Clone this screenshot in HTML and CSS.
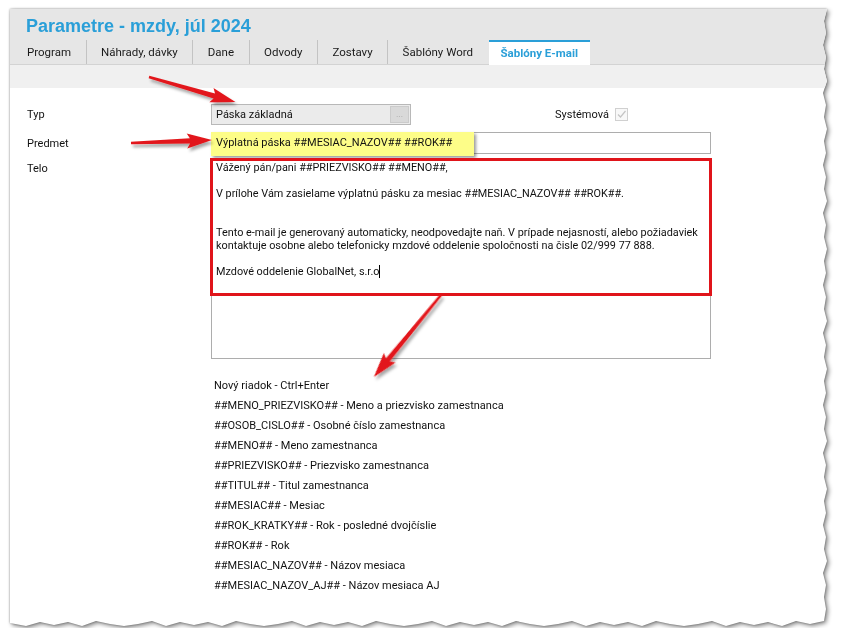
FILE: index.html
```html
<!DOCTYPE html>
<html lang="sk">
<head>
    <meta charset="UTF-8">
    <title>Parametre - mzdy</title>
    <link rel="stylesheet" href="styles.css">
</head>
<body>
    <div class="sheet">
        <div class="panel">
            <header class="top">
                <h1 class="title">Parametre - mzdy, júl 2024</h1>
                <nav class="tabs">
                    <span class="tab">Program</span>
                    <span class="tab">Náhrady, dávky</span>
                    <span class="tab">Dane</span>
                    <span class="tab">Odvody</span>
                    <span class="tab">Zostavy</span>
                    <span class="tab">Šablóny Word</span>
                    <span class="tab active">Šablóny E-mail</span>
                </nav>
            </header>
            <div class="toolbar"></div>
            <section class="form">
                <div class="row">
                    <span class="lbl">Typ</span>
                    <div class="select">
                        <span>Páska základná</span>
                        <span class="dots">...</span>
                    </div>
                    <span class="sys">Systémová</span>
                    <span class="check">
                        <svg width="11" height="11" viewBox="0 0 11 11"><path d="M2 5.5 L4.5 8 L9.5 2" fill="none" stroke="#c4c4c4" stroke-width="1.2"/></svg>
                    </span>
                </div>
                <div class="row row-predmet">
                    <span class="lbl">Predmet</span>
                    <div class="input">
                        <div class="highlight">Výplatná páska ##MESIAC_NAZOV## ##ROK##</div>
                    </div>
                </div>
                <div class="row row-telo">
                    <span class="lbl lbl-top">Telo</span>
                    <div class="textarea">
                        <p>Vážený pán/pani ##PRIEZVISKO## ##MENO##,</p>
                        <p class="gap1">V prílohe Vám zasielame výplatnú pásku za mesiac ##MESIAC_NAZOV## ##ROK##.</p>
                        <p class="gap2">Tento e-mail je generovaný automaticky, neodpovedajte naň. V prípade nejasností, alebo požiadaviek</p>
                        <p>kontaktuje osobne alebo telefonicky mzdové oddelenie spoločnosti na čisle 02/999 77 888.</p>
                        <p class="gap1">Mzdové oddelenie GlobalNet, s.r.o<span class="caret"></span></p>
                        <div class="mark"></div>
                    </div>
                </div>
                <ul class="hints">
                    <li>Nový riadok - Ctrl+Enter</li>
                    <li>##MENO_PRIEZVISKO## - Meno a priezvisko zamestnanca</li>
                    <li>##OSOB_CISLO## - Osobné číslo zamestnanca</li>
                    <li>##MENO## - Meno zamestnanca</li>
                    <li>##PRIEZVISKO## - Priezvisko zamestnanca</li>
                    <li>##TITUL## - Titul zamestnanca</li>
                    <li>##MESIAC## - Mesiac</li>
                    <li>##ROK_KRATKY## - Rok - posledné dvojčíslie</li>
                    <li>##ROK## - Rok</li>
                    <li>##MESIAC_NAZOV## - Názov mesiaca</li>
                    <li>##MESIAC_NAZOV_AJ## - Názov mesiaca AJ</li>
                </ul>
            </section>
        </div>
    </div>

    <svg class="arrows" width="845" height="641" viewBox="0 0 845 641">
        <defs>
            <filter id="tien" x="-20%" y="-50%" width="140%" height="200%">
                <feDropShadow dx="2" dy="3" stdDeviation="1.6" flood-color="#000" flood-opacity="0.35"/>
            </filter>
        </defs>
        <g fill="#e2191b" filter="url(#tien)">
            <polygon transform="translate(149 77) rotate(16.2)" points="0,-1.2 68,-2.6 65,-7.5 90,0 65,7.5 68,2.6 0,1.2"/>
            <polygon transform="translate(131 143) rotate(-2.1)" points="0,-1.2 59,-2.6 56,-7.5 81,0 56,7.5 59,2.6 0,1.2"/>
            <polygon transform="translate(441 295) rotate(129.3)" points="0,-1.2 84,-2.6 81,-7.5 106,0 81,7.5 84,2.6 0,1.2"/>
        </g>
    </svg>
</body>
</html>
```

FILE: styles.css
```css
* {
    box-sizing: border-box;
}
body {
    margin: 0;
    background: #fff;
    font-family: Roboto, "Liberation Sans", Arial, sans-serif;
    font-size: 11px;
    color: #111;
    position: relative;
}
.sheet {
    margin: 9px 0 0 10px;
    width: 818px;
    filter: drop-shadow(0 0 1px rgba(0,0,0,.35)) drop-shadow(2px 2px 2px rgba(0,0,0,.45));
}
.panel {
    height: 619px;
    background: #fff;
    clip-path: polygon(0 0, 817px 0, 814px 12px, 816px 24px, 813px 36px, 816px 48px, 814px 60px, 817px 72px, 813px 84px, 816px 96px, 814px 108px, 817px 120px, 814px 132px, 816px 144px, 813px 156px, 816px 168px, 814px 180px, 817px 192px, 813px 204px, 816px 216px, 814px 228px, 817px 240px, 814px 252px, 816px 264px, 813px 276px, 816px 288px, 814px 300px, 817px 312px, 813px 324px, 816px 336px, 814px 348px, 817px 360px, 814px 372px, 816px 384px, 813px 396px, 816px 408px, 814px 420px, 817px 432px, 813px 444px, 816px 456px, 814px 468px, 817px 480px, 814px 492px, 816px 504px, 813px 516px, 816px 528px, 814px 540px, 817px 552px, 813px 564px, 816px 576px, 814px 588px, 816px 600px, 814px 612px, 800px 615px, 786px 612px, 772px 617px, 758px 613px, 744px 616px, 730px 613px, 716px 617px, 702px 612px, 688px 615px, 674px 617px, 660px 615px, 646px 612px, 632px 617px, 618px 613px, 604px 616px, 590px 613px, 576px 617px, 562px 612px, 548px 615px, 534px 617px, 520px 615px, 506px 612px, 492px 617px, 478px 613px, 464px 616px, 450px 613px, 436px 617px, 422px 612px, 408px 615px, 394px 617px, 380px 615px, 366px 612px, 352px 617px, 338px 613px, 324px 616px, 310px 613px, 296px 617px, 282px 612px, 268px 615px, 254px 617px, 240px 615px, 226px 612px, 212px 617px, 198px 613px, 184px 616px, 170px 613px, 156px 617px, 142px 612px, 128px 615px, 114px 617px, 100px 615px, 86px 612px, 72px 617px, 58px 613px, 44px 616px, 30px 613px, 16px 617px, 0 614px);
}
.top {
    background: #e6e6e6;
    border-bottom: 1px solid #d3d3d3;
}
.title {
    margin: 0;
    padding: 6px 0 3px 16px;
    font: bold 18px/22px "Liberation Sans", Arial, sans-serif;
    color: #2a9fd8;
}
.tabs {
    display: flex;
    height: 24px;
    padding-left: 2.5px;
}
.tab {
    padding: 0 14.5px;
    line-height: 25px;
    font-size: 11.5px;
    color: #1a1a1a;
    border-left: 1px solid #c3c3c3;
}
.tab:first-child {
    border-left: 0;
}
.tab.active {
    margin-left: 1px;
    margin-bottom: -1px;
    padding: 0 12px;
    border-left: 0;
    border-top: 2px solid #2a9fd8;
    background: #fff;
    line-height: 23px;
    font-weight: bold;
    color: #2a9fd8;
}
.toolbar {
    height: 23px;
    background: #f0f0f0;
}
.form {
    padding-top: 16px;
}
.row {
    display: flex;
    align-items: center;
}
.lbl {
    width: 201px;
    padding-left: 17px;
}
.lbl-top {
    align-self: flex-start;
    padding-top: 4px;
    line-height: 13px;
}
.select {
    display: flex;
    align-items: center;
    width: 200px;
    height: 21px;
    padding-left: 4px;
    border: 1px solid #b8b8b8;
    background: #ebebeb;
}
.dots {
    margin-left: auto;
    margin-right: 1px;
    width: 19px;
    height: 17px;
    border: 1px solid #cbcbcb;
    background: #d9d9d9;
    color: #a8a8a8;
    font-size: 9px;
    line-height: 15px;
    text-align: center;
}
.sys {
    margin-left: 144px;
}
.check {
    display: flex;
    align-items: center;
    justify-content: center;
    margin-left: 6px;
    width: 13px;
    height: 13px;
    border: 1px solid #d0d0d0;
    background: #f8f8f8;
}
.row-predmet {
    margin-top: 7px;
}
.input {
    position: relative;
    width: 500px;
    height: 22px;
    border: 1px solid #adadad;
    background: #fff;
}
.highlight {
    position: absolute;
    left: -1px;
    top: -1px;
    width: 263px;
    height: 24px;
    padding-left: 5px;
    line-height: 22px;
    background: #fdfd88;
    box-shadow: 2px 2px 3px rgba(0,0,0,.4);
    white-space: nowrap;
}
.row-telo {
    margin-top: 4px;
    align-items: flex-start;
}
.textarea {
    position: relative;
    width: 500px;
    height: 201px;
    padding: 2px 4px;
    border: 1px solid #adadad;
    font-size: 10.85px;
    line-height: 13px;
    white-space: nowrap;
}
.textarea p {
    margin: 0;
}
.textarea .gap1 {
    margin-top: 13px;
}
.textarea .gap2 {
    margin-top: 26px;
}
.caret {
    display: inline-block;
    width: 1px;
    height: 13px;
    vertical-align: top;
    background: #000;
}
.mark {
    position: absolute;
    left: -2px;
    top: -1px;
    width: 502px;
    height: 138px;
    border: 3px solid #e0141a;
}
.hints {
    list-style: none;
    margin: 17px 0 0;
    padding-left: 204px;
}
.hints li {
    line-height: 20px;
}
.arrows {
    position: absolute;
    left: 0;
    top: 0;
    pointer-events: none;
}
```
